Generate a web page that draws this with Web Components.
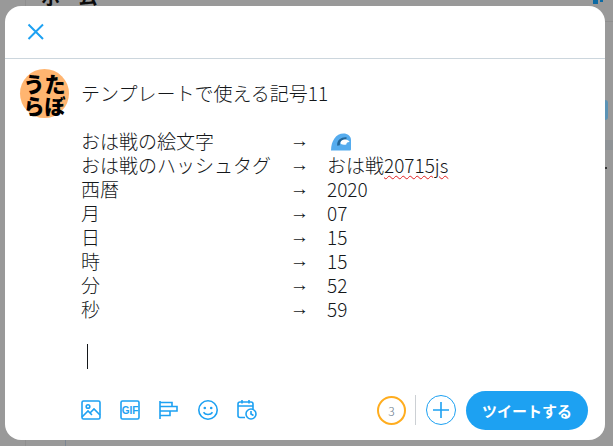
<!DOCTYPE html>
<html>
<head>
<meta charset="utf-8">
<style>
html, body { margin: 0; height: 100%; background: #999; }
body { font-family: "Noto Sans CJK JP", "Liberation Sans", sans-serif; overflow: hidden; }
</style>
</head>
<body>
<modal-backdrop>
  <tweet-dialog>
    <dialog-header></dialog-header>
    <tweet-composer></tweet-composer>
    <composer-toolbar></composer-toolbar>
  </tweet-dialog>
</modal-backdrop>

<script>
const BLUE = '#1da1f2'

// the dimmed page behind the dialog only peeks out at the edges
class ModalBackdrop extends HTMLElement {
  constructor () {
    super()
    this.attachShadow({ mode: 'open' }).innerHTML = `
<style>
:host { display: block; height: 446px; box-sizing: border-box; padding: 6px 8px 6px 5px; position: relative; overflow: hidden; }
.behind { position: absolute; left: 41px; top: -15px; font: bold 19px/24px "Noto Sans CJK JP", sans-serif; color: #0b0b0b; }
.bit { position: absolute; }
.frame { position: relative; height: 100%; }
</style>
<div class="behind">ホーム</div>
<div class="bit" style="left:25px;top:0;width:1px;height:6px;background:#8f8f8f"></div>
<div class="bit" style="left:25px;bottom:0;width:1px;height:6px;background:#8f8f8f"></div>
<div class="bit" style="left:65px;bottom:0;width:1px;height:6px;background:#7d8794"></div>
<div class="bit" style="left:593px;top:0;width:5px;height:4px;background:#0d6aa3"></div>
<div class="bit" style="left:600px;top:0;width:3px;height:2px;background:#0d6aa3"></div>
<div class="bit" style="left:605px;top:21px;width:8px;height:1px;background:#8f8f8f"></div>
<div class="bit" style="left:605px;top:100px;width:3px;height:20px;background:#5b93b5;border-radius:0 3px 3px 0"></div>
<div class="bit" style="left:605px;top:140px;width:8px;height:10px;background:#8f9396"></div>
<div class="bit" style="left:605px;top:167px;width:2px;height:2px;background:#333"></div>
<div class="frame"><slot></slot></div>`
  }
}

class TweetDialog extends HTMLElement {
  constructor () {
    super()
    this.attachShadow({ mode: 'open' }).innerHTML = `
<style>
:host { display: flex; flex-direction: column; height: 100%; background: #fff; border-radius: 16px; overflow: hidden; }
</style>
<slot></slot>`
  }
}

class DialogHeader extends HTMLElement {
  constructor () {
    super()
    this.attachShadow({ mode: 'open' }).innerHTML = `
<style>
:host { display: flex; align-items: center; height: 52px; padding-left: 20px; border-bottom: 1px solid #ccd6dd; flex: none; }
svg { width: 22px; height: 22px; display: block; }
</style>
<svg viewBox="0 0 22 22"><path d="M3.500 3.500 18 18M18 3.500 3.500 18" stroke="${BLUE}" stroke-width="2" fill="none"/></svg>`
  }
}

class TweetComposer extends HTMLElement {
  constructor () {
    super()
    const rows = [
      ['おは戦の絵文字', '<svg class="wave" viewBox="0 0 20 18"><path d="M0 17.500C0 8 5 .5 12.500 .5 16.500 .5 20 3 20 7v9c0 1-.5 1.500-1.500 1.500z" fill="#55acee"/><path d="M7.500 12.500C7 8 10.500 5 15.500 5.500" fill="none" stroke="#226699" stroke-width="2.600"/><path d="M9.500 10c0-2.800 2.800-4 5.500-3.500 2 .4 3 1.200 3.500 2.500-1.500-.2-3 .6-3.200 2.400-2.500.6-5.800.3-5.800-1.400z" fill="#fff"/></svg>'],
      ['おは戦のハッシュタグ', 'おは戦<span class="typo">20715js</span>'],
      ['西暦', '2020'],
      ['月', '07'],
      ['日', '15'],
      ['時', '15'],
      ['分', '52'],
      ['秒', '59']
    ]
    const lines = rows.map(r => `<span>${r[0]}</span><span class="arrow">→</span><span class="val">${r[1]}</span>`).join('')
    this.attachShadow({ mode: 'open' }).innerHTML = `
<style>
:host { display: flex; flex: 1; gap: 12px; padding: 10px 15px 0; color: #14171a; font: 300 19px/24px "Noto Sans CJK JP", sans-serif; }
.avatar { width: 49px; height: 49px; flex: none; border-radius: 50%; background: #ffb570; color: #000; font: 900 21px/22px "Noto Sans CJK JP", sans-serif; text-align: center; display: flex; align-items: center; justify-content: center; }
.text { flex: 1; padding-top: 12px; }
.title { margin-bottom: 24px; }
.grid { display: grid; grid-template-columns: 209px 37px 1fr; }
.arrow { font-family: "Liberation Sans", sans-serif; }
.wave { width: 20px; height: 18px; vertical-align: -2px; margin-left: 4px; }
.typo { text-decoration: underline wavy #e02020 1px; text-underline-offset: 2px; }
.caret { width: 1px; height: 25px; background: #14171a; margin-top: 23px; margin-left: 6px; }
</style>
<div class="avatar"><div>うた<br>らぼ</div></div>
<div class="text">
  <div class="title">テンプレートで使える記号11</div>
  <div class="grid">${lines}</div>
  <div class="caret"></div>
</div>`
  }
}

class ComposerToolbar extends HTMLElement {
  constructor () {
    super()
    const s = `fill="none" stroke="${BLUE}" stroke-width="1.6"`
    this.attachShadow({ mode: 'open' }).innerHTML = `
<style>
:host { display: flex; align-items: center; flex: none; height: 40px; padding: 0 17px 10px 75px; font-family: "Noto Sans CJK JP", sans-serif; }
.tools { display: flex; gap: 19px; flex: 1; padding-left: 1px; }
svg { width: 20px; height: 20px; display: block; }
.gif { font: bold 10px "Liberation Sans", sans-serif; fill: ${BLUE}; }
.count { width: 29px; height: 29px; box-sizing: border-box; border: 2px solid #ffad1f; border-radius: 50%; display: flex; align-items: center; justify-content: center; font-size: 12px; color: #657786; font-weight: 300; }
.sep { width: 1px; height: 30px; background: #ccd0d4; margin: 0 10px 0 9px; }
.plus { width: 30px; height: 30px; box-sizing: border-box; border: 1px solid ${BLUE}; border-radius: 50%; display: flex; align-items: center; justify-content: center; margin-right: 10px; }
button { height: 39px; width: 122px; padding: 0; border: 0; border-radius: 20px; background: ${BLUE}; color: #fff; font: 700 15px "Noto Sans CJK JP", sans-serif; }
</style>
<div class="tools">
  <svg viewBox="0 0 20 20"><rect x="1" y="1" width="18" height="18" rx="1.500" ${s}/><circle cx="7" cy="6.500" r="1.800" ${s}/><path d="M1 17l6-6 4 4M9 13l4-4 6 6" ${s}/></svg>
  <svg viewBox="0 0 20 20"><rect x="1" y="1" width="18" height="18" rx="1.500" ${s}/><text class="gif" x="10" y="13.500" text-anchor="middle">GIF</text></svg>
  <svg viewBox="0 0 20 20"><path d="M1 1v18M1 2.500h12v4H1M1 6.500h17v4.500H1M1 11h10v4.500H1" ${s}/></svg>
  <svg viewBox="0 0 20 20"><circle cx="10" cy="10" r="9.200" ${s}/><circle cx="6.800" cy="8" r="1.300" fill="${BLUE}"/><circle cx="13.200" cy="8" r="1.300" fill="${BLUE}"/><path d="M5.500 12.200c2 3 7 3 9 0" ${s}/></svg>
  <svg viewBox="0 0 20 20"><path d="M8 17.500H3a2 2 0 0 1-2-2V4a2 2 0 0 1 2-2h11a2 2 0 0 1 2 2v5M1 6h15M5 0v3.500M12 0v3.500" ${s}/><circle cx="14" cy="14" r="5" ${s}/><path d="M14 11v3l2.500 1.500" ${s}/></svg>
</div>
<div class="count">3</div>
<div class="sep"></div>
<div class="plus"><svg viewBox="0 0 20 20"><path d="M10 2v16M2 10h16" fill="none" stroke="${BLUE}" stroke-width="1.600"/></svg></div>
<button>ツイートする</button>`
  }
}

customElements.define('modal-backdrop', ModalBackdrop)
customElements.define('tweet-dialog', TweetDialog)
customElements.define('dialog-header', DialogHeader)
customElements.define('tweet-composer', TweetComposer)
customElements.define('composer-toolbar', ComposerToolbar)
</script>
</body>
</html>
